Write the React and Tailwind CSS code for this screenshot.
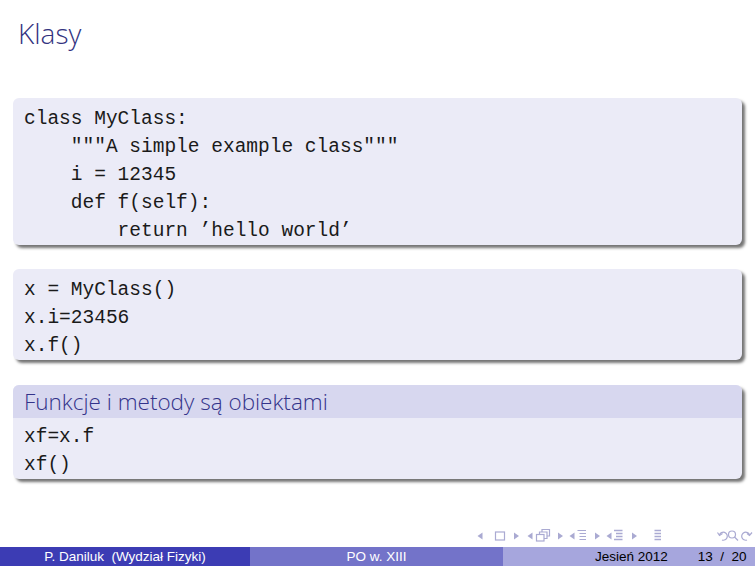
import React from "react";

const mono = { fontFamily: '"Liberation Mono", "DejaVu Sans Mono", monospace' };

const CodeBlock = ({ lines, title }) => (
  <div className="mx-[13px] rounded-[6px] bg-[#ebebf7] shadow-[3px_3px_3px_rgba(0,0,0,0.55)] overflow-hidden">
    {title && (
      <div className="bg-[#d7d7ef] h-[33px] flex items-center px-[11px] text-[22.5px] text-[#33338a] font-['Open_Sans','Lato',sans-serif] font-light">
        {title}
      </div>
    )}
    <div className={`px-[11px] ${title ? "pt-[5px]" : "pt-[7px]"} pb-0 text-[19.5px] leading-[28px] text-[#1a1a1a] whitespace-pre`} style={mono}>
      {lines.map((l, i) => (
        <div key={i}>{l}</div>
      ))}
    </div>
  </div>
);

const C = "#aaaad2";

const NavIcons = () => (
  <svg width="285" height="20" viewBox="0 0 285 20" fill="none" stroke={C} strokeWidth="1.2">
    {/* slide */}
    <path d="M7.5 10 L12.5 6.5 L12.5 13.5 Z" fill={C} stroke="none" />
    <rect x="25.5" y="6" width="9" height="8" />
    <path d="M44 6.5 L49 10 L44 13.5 Z" fill={C} stroke="none" />
    {/* frame */}
    <path d="M57.5 10 L62.5 6.5 L62.5 13.5 Z" fill={C} stroke="none" />
    <rect x="66.5" y="8.5" width="7.5" height="6.5" />
    <path d="M69.5 8.5 V6 H77 V12.5 H74" />
    <path d="M72 6 V3.5 H79.5 V10 H77" />
    <path d="M88 6.5 L93 10 L88 13.5 Z" fill={C} stroke="none" />
    {/* section */}
    <path d="M99.5 10 L104.5 6.5 L104.5 13.5 Z" fill={C} stroke="none" />
    <path d="M107.5 4.5 H116 M109.5 7.5 H116 M109.5 10.5 H116 M109.5 13.5 H116" />
    <path d="M125 6.5 L130 10 L125 13.5 Z" fill={C} stroke="none" />
    {/* subsection */}
    <path d="M136.5 10 L141.5 6.5 L141.5 13.5 Z" fill={C} stroke="none" />
    <path d="M144 4.5 H152.5 M146 7.5 H152.5 M146 10.5 H152.5 M144 13.5 H152.5" strokeWidth="1.7" />
    <path d="M162 6.5 L167 10 L162 13.5 Z" fill={C} stroke="none" />
    {/* align */}
    <path d="M184.5 4.5 H191 M184.5 7.5 H191 M184.5 10.5 H191 M184.5 13.5 H191" strokeWidth="1.6" />
    {/* back / search / forward */}
    <path d="M249.5 9 A4 4 0 1 1 252 14" />
    <path d="M247.5 6.5 L249.5 9.5 L252.5 7.5" />
    <circle cx="262" cy="8.5" r="3.5" />
    <path d="M264.5 11 L268 14.5" />
    <path d="M277 14 A4 4 0 1 1 279.5 9" />
    <path d="M282 6.5 L279.5 9.5 L277 7.5" />
  </svg>
);

export default function App() {
  return (
    <div className="w-[755px] h-[566px] bg-white flex flex-col overflow-hidden">
      <div className="pt-[16px] pl-[18px] h-[98px] text-[28px] leading-[34px] text-[#33337f] font-['Open_Sans','Lato',sans-serif] font-light">
        Klasy
      </div>

      <CodeBlock
        lines={[
          "class MyClass:",
          '    """A simple example class"""',
          "    i = 12345",
          "    def f(self):",
          "        return \u2019hello world\u2019",
        ]}
      />

      <div className="h-[24px]" />

      <CodeBlock lines={["x = MyClass()", "x.i=23456", "x.f()"]} />

      <div className="h-[25px]" />

      <CodeBlock title="Funkcje i metody są obiektami" lines={["xf=x.f", "xf()"]} />

      <div className="flex-1" />

      <div className="flex justify-end h-[21px] items-start">
        <NavIcons />
      </div>

      <div className="flex h-[19px] text-[13.5px] font-['Liberation_Sans',Arial,sans-serif] leading-[19px]">
        <div className="w-[250px] bg-[#3c3cb4] text-white text-center">
          P. Daniluk&nbsp;&nbsp;(Wydział Fizyki)
        </div>
        <div className="w-[253px] bg-[#7373c9] text-white text-center">PO w. XIII</div>
        <div className="flex-1 bg-[#a6a6dd] text-black flex">
          <span className="ml-[92px]">Jesień 2012</span>
          <span className="ml-[30px]">13&nbsp;&nbsp;/&nbsp;&nbsp;20</span>
        </div>
      </div>
    </div>
  );
}
